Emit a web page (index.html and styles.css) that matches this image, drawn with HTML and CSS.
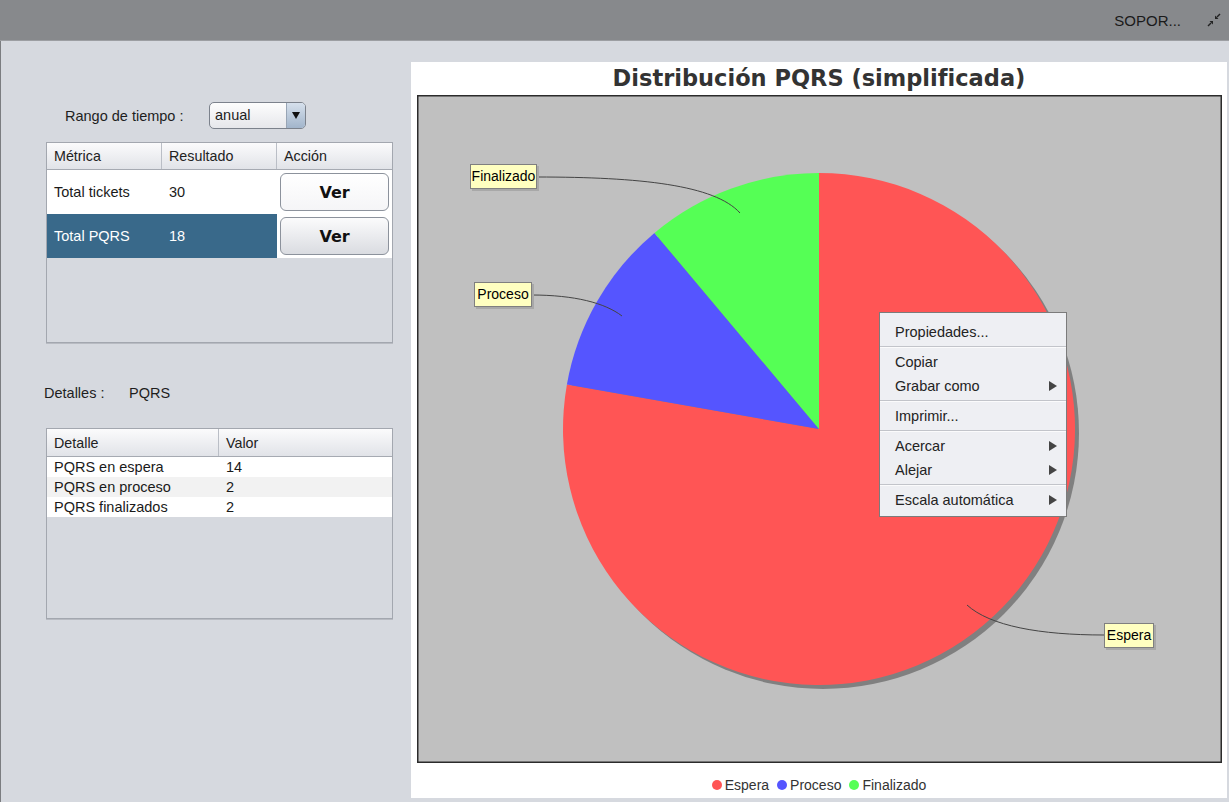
FILE: index.html
```html
<!DOCTYPE html>
<html lang="es">
<head>
<meta charset="utf-8">
<title>SOPORTE</title>
<link rel="stylesheet" href="styles.css">
</head>
<body>
<div class="titlebar">
  <span class="titlebar-text">SOPOR...</span>
  <svg class="restore-icon" width="14" height="14" viewBox="0 0 14 14">
    <polygon points="8,6 8,2.5 11.5,6" fill="#222"/>
    <line x1="10" y1="4" x2="13" y2="1" stroke="#222" stroke-width="1.4"/>
    <polygon points="6,8 6,11.5 2.5,8" fill="#222"/>
    <line x1="4" y1="10" x2="1" y2="13" stroke="#222" stroke-width="1.4"/>
  </svg>
</div>
<div class="main">
  <div class="left">
    <div class="range-row">
      <span class="range-label">Rango de tiempo :</span>
      <div class="combo">
        <span class="combo-value">anual</span>
        <span class="combo-btn">
          <svg width="8" height="7" viewBox="0 0 8 7"><polygon points="0,0 8,0 4,7" fill="#111"/></svg>
        </span>
      </div>
    </div>

    <div class="table metrics">
      <div class="thead">
        <div class="th">Métrica</div>
        <div class="th">Resultado</div>
        <div class="th">Acción</div>
      </div>
      <div class="tr">
        <div class="td">Total tickets</div>
        <div class="td">30</div>
        <div class="td btn-cell"><button class="ver-btn first">Ver</button></div>
      </div>
      <div class="tr selected">
        <div class="td">Total PQRS</div>
        <div class="td">18</div>
        <div class="td btn-cell"><button class="ver-btn">Ver</button></div>
      </div>
    </div>

    <div class="details-row">
      <span class="details-label">Detalles :</span>
      <span class="details-value">PQRS</span>
    </div>

    <div class="table detail">
      <div class="thead">
        <div class="th">Detalle</div>
        <div class="th">Valor</div>
      </div>
      <div class="tr"><div class="td">PQRS en espera</div><div class="td">14</div></div>
      <div class="tr alt"><div class="td">PQRS en proceso</div><div class="td">2</div></div>
      <div class="tr"><div class="td">PQRS finalizados</div><div class="td">2</div></div>
    </div>
  </div>

  <div class="chart">
    <div class="chart-title">Distribución PQRS (simplificada)</div>
    <div class="plot">
      <svg class="pie" width="805" height="668" viewBox="417 95 805 668">
        <rect x="417.75" y="95.75" width="803.5" height="666.5" fill="#c0c0c0" stroke="#2b2b2b" stroke-width="1.5"/>
        <circle cx="823" cy="433" r="256" fill="#808080"/>
        <path d="M819,429 L819,173 A256,256 0 1 1 566.9,384.55 Z" fill="#ff5555"/>
        <path d="M819,429 L566.9,384.55 A256,256 0 0 1 654.45,232.9 Z" fill="#5555ff"/>
        <path d="M819,429 L654.45,232.9 A256,256 0 0 1 819,173 Z" fill="#55ff55"/>
        <path d="M537,177 C640,177 715,185 740,213" fill="none" stroke="#444" stroke-width="1"/>
        <path d="M531,295 C575,295 605,303 622,316" fill="none" stroke="#444" stroke-width="1"/>
        <path d="M1104,635 C1040,635 990,626 967,605" fill="none" stroke="#444" stroke-width="1"/>
      </svg>
      <div class="pie-label label-finalizado">Finalizado</div>
      <div class="pie-label label-proceso">Proceso</div>
      <div class="pie-label label-espera">Espera</div>

      <div class="context-menu">
        <div class="menu-item">Propiedades...</div>
        <div class="menu-sep"></div>
        <div class="menu-item">Copiar</div>
        <div class="menu-item">Grabar como<svg class="sub-arrow" width="8" height="10" viewBox="0 0 8 10"><polygon points="0,0 8,5 0,10" fill="#444"/></svg></div>
        <div class="menu-sep"></div>
        <div class="menu-item">Imprimir...</div>
        <div class="menu-sep"></div>
        <div class="menu-item">Acercar<svg class="sub-arrow" width="8" height="10" viewBox="0 0 8 10"><polygon points="0,0 8,5 0,10" fill="#444"/></svg></div>
        <div class="menu-item">Alejar<svg class="sub-arrow" width="8" height="10" viewBox="0 0 8 10"><polygon points="0,0 8,5 0,10" fill="#444"/></svg></div>
        <div class="menu-sep"></div>
        <div class="menu-item">Escala automática<svg class="sub-arrow" width="8" height="10" viewBox="0 0 8 10"><polygon points="0,0 8,5 0,10" fill="#444"/></svg></div>
      </div>
    </div>
    <div class="legend">
      <span class="legend-item"><span class="dot dot-espera"></span>Espera</span>
      <span class="legend-item"><span class="dot dot-proceso"></span>Proceso</span>
      <span class="legend-item"><span class="dot dot-finalizado"></span>Finalizado</span>
    </div>
  </div>
</div>
</body>
</html>
```

FILE: styles.css
```css
* { box-sizing: border-box; }

html, body {
  margin: 0;
  padding: 0;
}

body {
  width: 1229px;
  height: 802px;
  overflow: hidden;
  background: #d6d9df;
  font-family: "Liberation Sans", Arial, sans-serif;
  font-size: 14.5px;
  color: #1e1e1e;
}

/* ---------- title bar ---------- */
.titlebar {
  height: 41px;
  background: #87898c;
  display: flex;
  justify-content: flex-end;
  align-items: center;
  padding-right: 8px;
  gap: 26px;
  border-bottom: 1px solid #9c9ea2;
}

.titlebar-text {
  font-size: 15px;
  color: #1a1a1a;
  margin-top: 1px;
}

.restore-icon {
  display: block;
}

/* ---------- main ---------- */
.main {
  display: flex;
  height: 761px;
  border-left: 1px solid #7b7d80;
}

.left {
  width: 410px;
  display: flex;
  flex-direction: column;
}

.range-row {
  display: flex;
  align-items: center;
  margin-top: 61px;
  padding-left: 64px;
  height: 27px;
}

.range-label {
  width: 144px;
  font-size: 14.5px;
  color: #1e1e1e;
}

.combo {
  width: 97px;
  height: 27px;
  border: 1px solid #7c828c;
  border-radius: 5px;
  background: linear-gradient(#fdfdfd, #e6e7eb);
  display: flex;
  overflow: hidden;
}

.combo-value {
  flex: 1;
  padding-left: 5px;
  line-height: 25px;
  font-size: 14.5px;
}

.combo-btn {
  width: 19px;
  background: linear-gradient(#d6e0ec, #a2b5cb);
  border-left: 1px solid #98a5b5;
  display: flex;
  align-items: center;
  justify-content: center;
}

.combo-btn svg { display: block; }

/* ---------- tables ---------- */
.table {
  margin-left: 45px;
  width: 347px;
  border: 1px solid #a3a7af;
  box-shadow: 0 1px 0 #b8bbc2;
  background: #d6d9df;
}

.table.metrics {
  margin-top: 13px;
  height: 201px;
}

.table.detail {
  margin-top: 25px;
  height: 191px;
}

.thead {
  display: grid;
  height: 27px;
  background: linear-gradient(#fbfbfc, #e1e3e8);
  border-bottom: 1px solid #a6aab2;
}

.detail .thead { height: 28px; }

.metrics .thead,
.metrics .tr {
  grid-template-columns: 115px 115px 115px;
}

.detail .thead,
.detail .tr {
  grid-template-columns: 172px 173px;
}

.th {
  display: flex;
  align-items: center;
  padding-left: 7px;
  font-size: 14.3px;
  color: #222;
  border-right: 1px solid #babec6;
}

.th:last-child { border-right: none; }

.tr {
  display: grid;
  background: #ffffff;
}

.metrics .tr { height: 44px; }

.detail .tr { height: 20px; }

.detail .tr.alt { background: #f2f2f2; }

.td {
  display: flex;
  align-items: center;
  padding-left: 7px;
  font-size: 14.5px;
  color: #1a1a1a;
}

.tr.selected .td {
  background: #39698a;
  color: #ffffff;
}

.tr.selected .td.btn-cell {
  background: #ffffff;
}

.td.btn-cell {
  padding: 3px;
}

.ver-btn {
  width: 100%;
  height: 100%;
  margin: 0;
  border: 1px solid #8c929c;
  border-radius: 6px;
  background: linear-gradient(#fbfbfc, #dadce1);
  font-family: "DejaVu Sans", sans-serif;
  font-weight: bold;
  font-size: 16px;
  color: #111;
  padding: 0;
}

.ver-btn.first {
  background: linear-gradient(#ffffff, #f5f5f7);
}

.details-row {
  display: flex;
  align-items: center;
  margin-top: 40px;
  margin-left: 43px;
  height: 20px;
}

.details-label {
  width: 85px;
  font-size: 14.5px;
}

.details-value {
  font-size: 14.5px;
}

/* ---------- chart ---------- */
.chart {
  width: 816px;
  height: 736px;
  margin-top: 21px;
  background: #ffffff;
  display: flex;
  flex-direction: column;
}

.chart-title {
  height: 29px;
  line-height: 29px;
  margin-top: 2px;
  margin-bottom: 2px;
  text-align: center;
  font-family: "DejaVu Sans", sans-serif;
  font-weight: bold;
  font-size: 22.5px;
  color: #333333;
}

.plot {
  position: relative;
  margin-left: 6px;
  width: 805px;
  height: 668px;
}

.pie {
  position: absolute;
  left: 0;
  top: 0;
  display: block;
}

.pie-label {
  position: absolute;
  height: 25px;
  line-height: 23px;
  background: #ffffc0;
  border: 1px solid #7f7f7f;
  box-shadow: 2px 2px 0 #a8a8a8;
  font-size: 14px;
  color: #000;
  text-align: center;
}

.label-finalizado { left: 53px; top: 69px; width: 67px; }
.label-proceso { left: 57px; top: 187px; width: 58px; }
.label-espera { left: 687px; top: 528px; width: 50px; }

.context-menu {
  position: absolute;
  left: 462px;
  top: 217px;
  width: 188px;
  background: #eeeff3;
  border: 1px solid #7b7b7b;
  padding: 7px 0 4px 0;
}

.menu-item {
  height: 24px;
  display: flex;
  align-items: center;
  justify-content: space-between;
  padding: 0 9px 0 15px;
  font-size: 14.5px;
  color: #232323;
}

.sub-arrow { display: block; }

.menu-sep {
  height: 2px;
  margin: 2px 0;
  border-top: 1px solid #c2c4ca;
  border-bottom: 1px solid #fbfbfc;
}

.legend {
  flex: 1;
  display: flex;
  justify-content: center;
  align-items: flex-start;
  padding-top: 14px;
  gap: 8px;
}

.legend-item {
  display: flex;
  align-items: center;
  gap: 3px;
  font-size: 14px;
  line-height: 16px;
  color: #333;
}

.dot {
  width: 10px;
  height: 10px;
  border-radius: 50%;
  display: inline-block;
}

.dot-espera { background: #ff5555; }
.dot-proceso { background: #5555ff; }
.dot-finalizado { background: #55ff55; }
```
